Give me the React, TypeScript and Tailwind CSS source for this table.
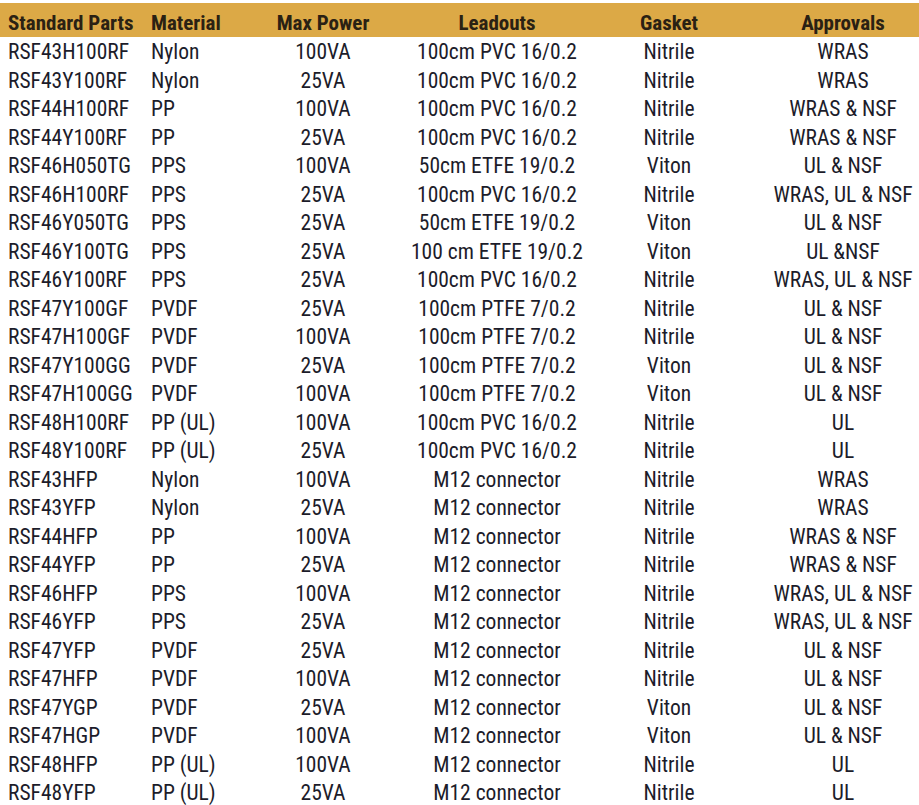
import React from "react";

type Row = [string, string, string, string, string, string];

const rows: Row[] = [
  ["RSF43H100RF", "Nylon", "100VA", "100cm PVC 16/0.2", "Nitrile", "WRAS"],
  ["RSF43Y100RF", "Nylon", "25VA", "100cm PVC 16/0.2", "Nitrile", "WRAS"],
  ["RSF44H100RF", "PP", "100VA", "100cm PVC 16/0.2", "Nitrile", "WRAS & NSF"],
  ["RSF44Y100RF", "PP", "25VA", "100cm PVC 16/0.2", "Nitrile", "WRAS & NSF"],
  ["RSF46H050TG", "PPS", "100VA", "50cm ETFE 19/0.2", "Viton", "UL & NSF"],
  ["RSF46H100RF", "PPS", "25VA", "100cm PVC 16/0.2", "Nitrile", "WRAS, UL & NSF"],
  ["RSF46Y050TG", "PPS", "25VA", "50cm ETFE 19/0.2", "Viton", "UL & NSF"],
  ["RSF46Y100TG", "PPS", "25VA", "100 cm ETFE 19/0.2", "Viton", "UL &NSF"],
  ["RSF46Y100RF", "PPS", "25VA", "100cm PVC 16/0.2", "Nitrile", "WRAS, UL & NSF"],
  ["RSF47Y100GF", "PVDF", "25VA", "100cm PTFE 7/0.2", "Nitrile", "UL & NSF"],
  ["RSF47H100GF", "PVDF", "100VA", "100cm PTFE 7/0.2", "Nitrile", "UL & NSF"],
  ["RSF47Y100GG", "PVDF", "25VA", "100cm PTFE 7/0.2", "Viton", "UL & NSF"],
  ["RSF47H100GG", "PVDF", "100VA", "100cm PTFE 7/0.2", "Viton", "UL & NSF"],
  ["RSF48H100RF", "PP (UL)", "100VA", "100cm PVC 16/0.2", "Nitrile", "UL"],
  ["RSF48Y100RF", "PP (UL)", "25VA", "100cm PVC 16/0.2", "Nitrile", "UL"],
  ["RSF43HFP", "Nylon", "100VA", "M12 connector", "Nitrile", "WRAS"],
  ["RSF43YFP", "Nylon", "25VA", "M12 connector", "Nitrile", "WRAS"],
  ["RSF44HFP", "PP", "100VA", "M12 connector", "Nitrile", "WRAS & NSF"],
  ["RSF44YFP", "PP", "25VA", "M12 connector", "Nitrile", "WRAS & NSF"],
  ["RSF46HFP", "PPS", "100VA", "M12 connector", "Nitrile", "WRAS, UL & NSF"],
  ["RSF46YFP", "PPS", "25VA", "M12 connector", "Nitrile", "WRAS, UL & NSF"],
  ["RSF47YFP", "PVDF", "25VA", "M12 connector", "Nitrile", "UL & NSF"],
  ["RSF47HFP", "PVDF", "100VA", "M12 connector", "Nitrile", "UL & NSF"],
  ["RSF47YGP", "PVDF", "25VA", "M12 connector", "Viton", "UL & NSF"],
  ["RSF47HGP", "PVDF", "100VA", "M12 connector", "Viton", "UL & NSF"],
  ["RSF48HFP", "PP (UL)", "100VA", "M12 connector", "Nitrile", "UL"],
  ["RSF48YFP", "PP (UL)", "25VA", "M12 connector", "Nitrile", "UL"],
];

const grid = "grid grid-cols-[143px_120px_120px_228px_116px_192px]";

export default function App() {
  return (
    <div
      className="w-[919px] h-[805px] overflow-hidden bg-white pt-[3px]"
      style={{ fontFamily: '"Roboto Condensed", "Liberation Sans Narrow", "DejaVu Sans Condensed", sans-serif' }}
    >
      <div className={`${grid} h-[34px] bg-[#dca946] text-[21px] font-bold leading-[34px] text-[#2a2113] pt-[3px]`}>
        <div className="pl-2 whitespace-nowrap">Standard Parts</div>
        <div className="pl-2 whitespace-nowrap">Material</div>
        <div className="text-center whitespace-nowrap">Max Power</div>
        <div className="text-center whitespace-nowrap">Leadouts</div>
        <div className="text-center whitespace-nowrap">Gasket</div>
        <div className="pl-[40px] text-center whitespace-nowrap">Approvals</div>
      </div>
      <div className="pt-[1px]">
        {rows.map((r, i) => (
          <div key={i} className={`${grid} h-[28.5px] text-[21.5px] leading-[28.5px] text-[#1c1c2a]`}>
            <div className="pl-2 whitespace-nowrap">{r[0]}</div>
            <div className="pl-2 whitespace-nowrap">{r[1]}</div>
            <div className="text-center whitespace-nowrap">{r[2]}</div>
            <div className="text-center whitespace-nowrap">{r[3]}</div>
            <div className="text-center whitespace-nowrap">{r[4]}</div>
            <div className="pl-[40px] text-center whitespace-nowrap">{r[5]}</div>
          </div>
        ))}
      </div>
    </div>
  );
}
